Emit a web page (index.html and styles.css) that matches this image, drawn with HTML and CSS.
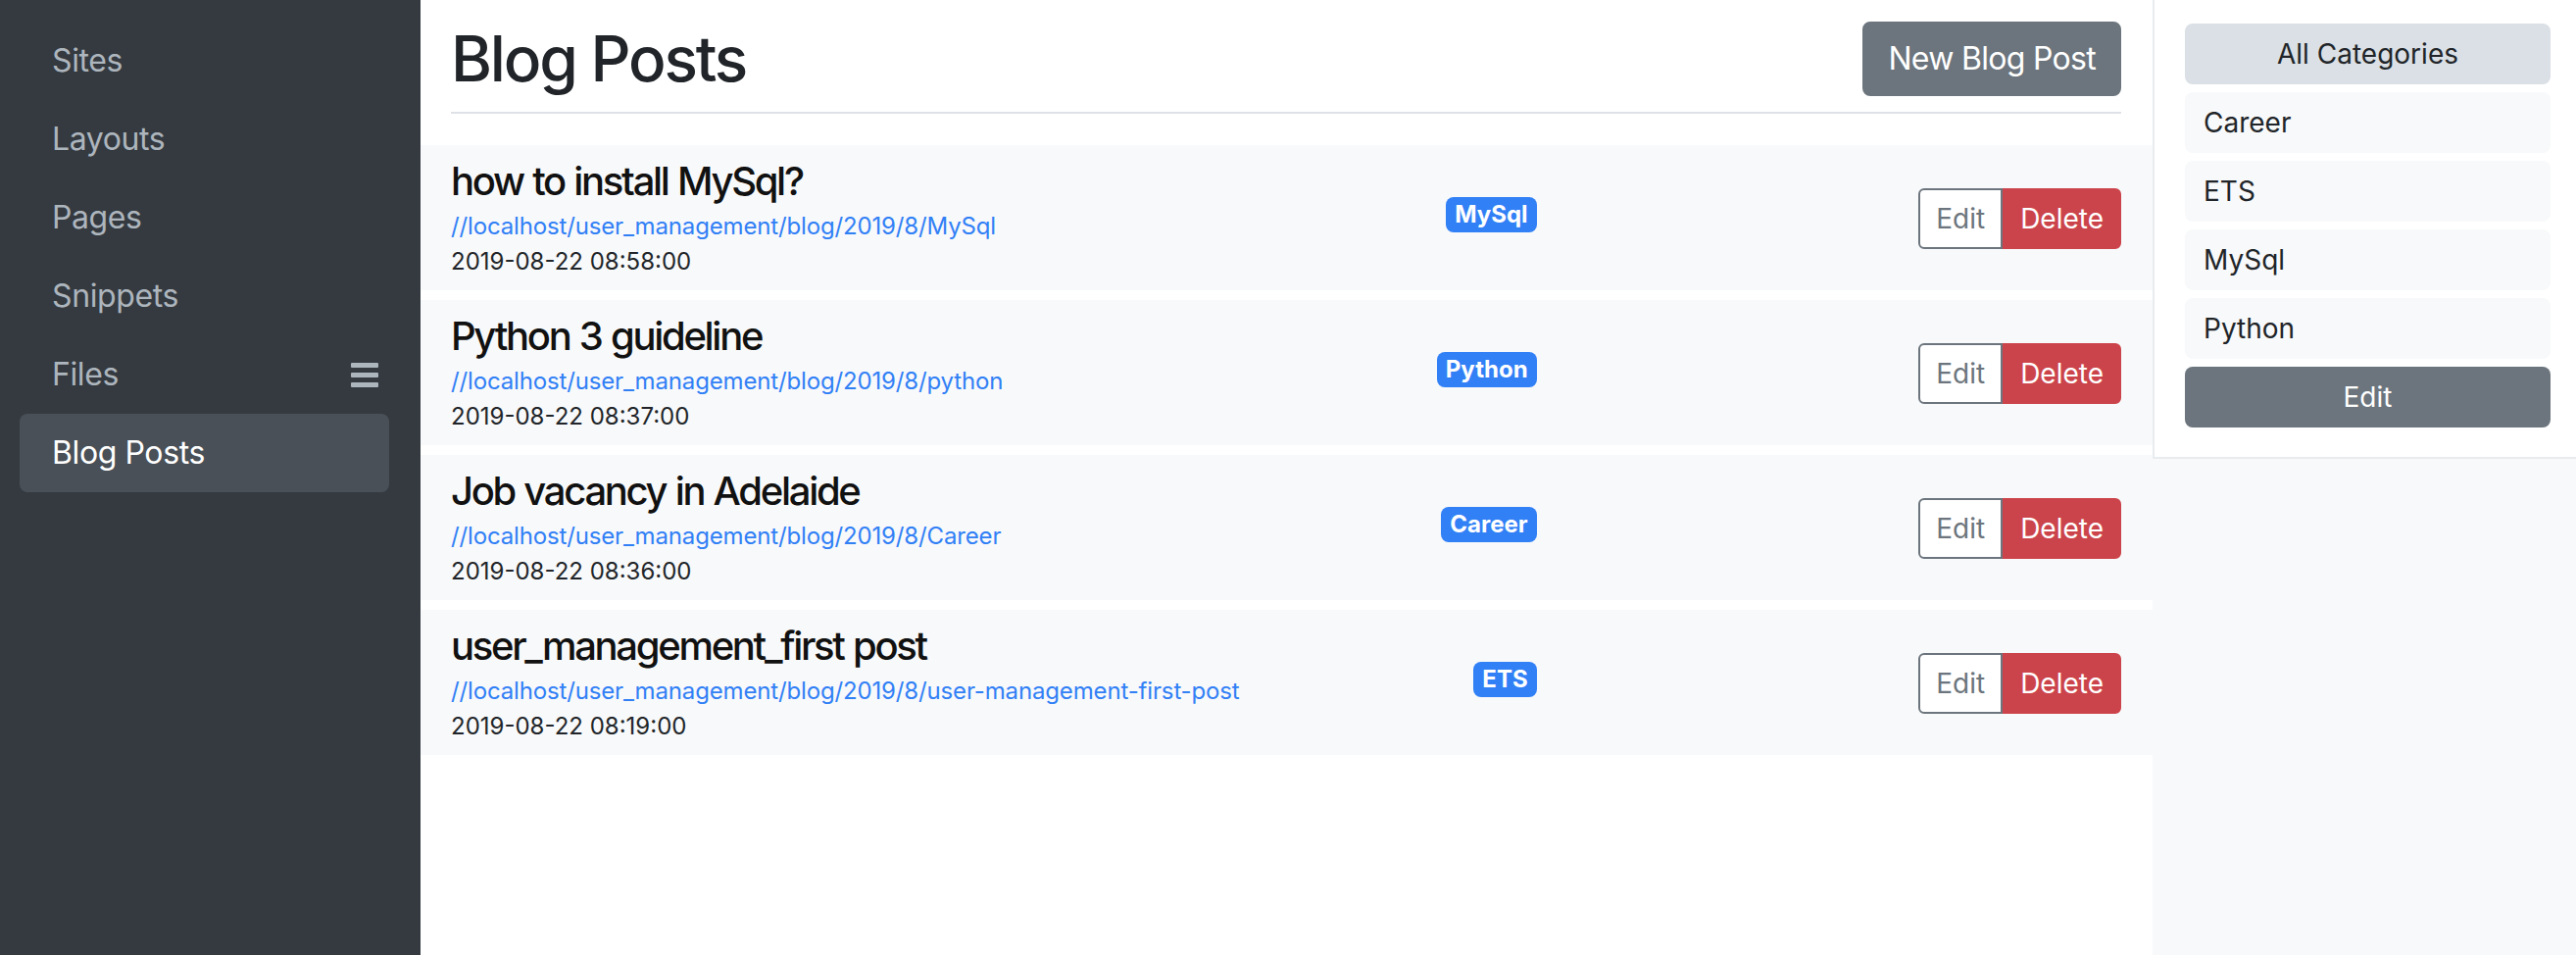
FILE: index.html
```html
<!DOCTYPE html>
<html lang="en">
<head>
<meta charset="utf-8">
<title>Blog Posts</title>
<link rel="stylesheet" href="styles.css">
</head>
<body>
<div class="app">
  <nav class="sidebar">
    <a class="nav-item">Sites</a>
    <a class="nav-item">Layouts</a>
    <a class="nav-item">Pages</a>
    <a class="nav-item">Snippets</a>
    <a class="nav-item">Files
      <svg class="menu-icon" width="28" height="25" viewBox="0 0 28 25" aria-hidden="true">
        <rect x="0" y="0" width="28" height="5" rx="1" fill="#adb5bd"/>
        <rect x="0" y="10" width="28" height="5" rx="1" fill="#adb5bd"/>
        <rect x="0" y="20" width="28" height="5" rx="1" fill="#adb5bd"/>
      </svg>
    </a>
    <a class="nav-item active">Blog Posts</a>
  </nav>

  <main class="main">
    <header class="page-header">
      <h2 class="page-title">Blog Posts</h2>
      <button class="btn btn-secondary">New Blog Post</button>
    </header>

    <div class="post-list">
      <div class="post">
        <div class="post-info">
          <h5 class="post-title">how to install MySql?</h5>
          <a class="post-url">//localhost/user_management/blog/2019/8/MySql</a>
          <div class="post-date">2019-08-22 08:58:00</div>
        </div>
        <span class="badge">MySql</span>
        <div class="post-actions">
          <div class="btn-group">
            <button class="btn-sm btn-outline">Edit</button>
            <button class="btn-sm btn-danger">Delete</button>
          </div>
        </div>
      </div>

      <div class="post">
        <div class="post-info">
          <h5 class="post-title">Python 3 guideline</h5>
          <a class="post-url">//localhost/user_management/blog/2019/8/python</a>
          <div class="post-date">2019-08-22 08:37:00</div>
        </div>
        <span class="badge">Python</span>
        <div class="post-actions">
          <div class="btn-group">
            <button class="btn-sm btn-outline">Edit</button>
            <button class="btn-sm btn-danger">Delete</button>
          </div>
        </div>
      </div>

      <div class="post">
        <div class="post-info">
          <h5 class="post-title">Job vacancy in Adelaide</h5>
          <a class="post-url">//localhost/user_management/blog/2019/8/Career</a>
          <div class="post-date">2019-08-22 08:36:00</div>
        </div>
        <span class="badge">Career</span>
        <div class="post-actions">
          <div class="btn-group">
            <button class="btn-sm btn-outline">Edit</button>
            <button class="btn-sm btn-danger">Delete</button>
          </div>
        </div>
      </div>

      <div class="post">
        <div class="post-info">
          <h5 class="post-title">user_management_first post</h5>
          <a class="post-url">//localhost/user_management/blog/2019/8/user-management-first-post</a>
          <div class="post-date">2019-08-22 08:19:00</div>
        </div>
        <span class="badge">ETS</span>
        <div class="post-actions">
          <div class="btn-group">
            <button class="btn-sm btn-outline">Edit</button>
            <button class="btn-sm btn-danger">Delete</button>
          </div>
        </div>
      </div>
    </div>
  </main>

  <aside class="aside">
    <div class="cat-panel">
      <div class="cat cat-all">All Categories</div>
      <div class="cat">Career</div>
      <div class="cat">ETS</div>
      <div class="cat">MySql</div>
      <div class="cat">Python</div>
      <button class="cat cat-edit">Edit</button>
    </div>
  </aside>
</div>
</body>
</html>
```

FILE: styles.css
```css
* { box-sizing: border-box; }

html, body {
  margin: 0;
  padding: 0;
}

body {
  font-family: Inter, "Noto Sans", "Liberation Sans", sans-serif;
  color: #212529;
  background: #fff;
  font-size: 32px;
  line-height: 1.5;
}

.app {
  display: flex;
  height: 974px;
}

/* Sidebar */
.sidebar {
  width: 429px;
  flex: 0 0 429px;
  background: #343a40;
  padding: 22px 32px 0 20px;
  display: flex;
  flex-direction: column;
}

.nav-item {
  display: flex;
  align-items: center;
  height: 80px;
  padding: 0 11px 0 33px;
  font-size: 32px;
  line-height: 48px;
  color: #adb5bd;
  text-decoration: none;
  border-radius: 8px;
  letter-spacing: -0.4px;
}

.nav-item.active {
  background: #495057;
  color: #fff;
}

.menu-icon {
  margin-left: auto;
  display: block;
}

/* Main */
.main {
  flex: 1 1 auto;
  min-width: 0;
  background: #fff;
}

.page-header {
  display: flex;
  align-items: center;
  justify-content: space-between;
  margin: 0 32px 32px 31px;
  padding: 22px 0 16px;
  border-bottom: 2px solid #dee2e6;
}

.page-title {
  margin: 0;
  font-size: 64px;
  line-height: 76px;
  font-weight: 500;
  color: #212529;
  letter-spacing: -2.2px;
}

.btn {
  font-family: inherit;
  font-size: 32px;
  line-height: 48px;
  padding: 12px 24px;
  border: 2px solid transparent;
  border-radius: 8px;
  letter-spacing: -0.7px;
  cursor: pointer;
}

.btn-secondary {
  background: #6c757d;
  border-color: #6c757d;
  color: #fff;
}

.post {
  display: flex;
  align-items: center;
  background: #f8f9fa;
  padding: 13px 32px 11px 31px;
  margin-bottom: 10px;
}

.post-info {
  flex: 1 1 auto;
  min-width: 0;
}

.post-title {
  margin: 0 0 4px;
  font-size: 40px;
  line-height: 48px;
  font-weight: 500;
  color: #111;
  letter-spacing: -2.3px;
  word-spacing: 1px;
}

.post-url {
  display: block;
  font-size: 24px;
  line-height: 36px;
  color: #3180f6;
  text-decoration: none;
  letter-spacing: -0.15px;
}

.post-date {
  font-size: 24px;
  line-height: 36px;
  color: #212529;
}

.badge {
  flex: 0 0 auto;
  margin-bottom: 8px;
  background: #3180f6;
  color: #fff;
  font-size: 24px;
  font-weight: 700;
  line-height: 24px;
  padding: 6px 9px;
  border-radius: 8px;
}

.post-actions {
  flex: 0 0 35%;
  display: flex;
  justify-content: flex-end;
}

.btn-group {
  display: flex;
}

.btn-sm {
  font-family: inherit;
  font-size: 28px;
  line-height: 42px;
  padding: 8px 16px;
  border: 2px solid transparent;
  margin: 0;
  cursor: pointer;
}

.btn-outline {
  background: #fff;
  color: #6c757d;
  border-color: #6c757d;
  border-radius: 6px 0 0 6px;
}

.btn-danger {
  background: #cc444b;
  border-color: #cc444b;
  color: #fff;
  border-radius: 0 6px 6px 0;
}

/* Right aside */
.aside {
  flex: 0 0 432px;
  width: 432px;
  background: #f8f9fa;
}

.cat-panel {
  background: #fff;
  border-left: 2px solid #e9ecef;
  border-bottom: 2px solid #e9ecef;
  padding: 24px 26px 30px 31px;
  display: flex;
  flex-direction: column;
  gap: 8px;
}

.cat {
  height: 62px;
  display: flex;
  align-items: center;
  padding: 0 19px;
  font-size: 28px;
  line-height: 42px;
  background: #f8f9fa;
  color: #212529;
  border-radius: 8px;
}

.cat-all {
  background: #dae0e5;
  justify-content: center;
}

.cat-edit {
  font-family: inherit;
  border: none;
  background: #6c757d;
  color: #fff;
  justify-content: center;
  cursor: pointer;
}
```
